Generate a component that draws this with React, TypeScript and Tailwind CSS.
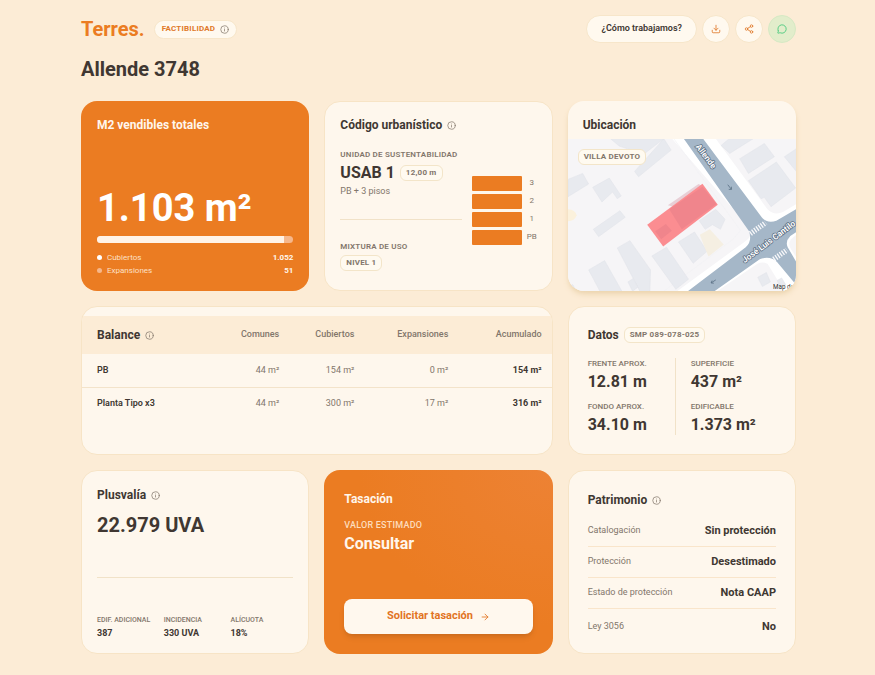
import React from 'react';
import { ArrowRight, Download, Info, MessageCircle, Share2 } from 'lucide-react';

const CARD = 'rounded-2xl border border-[#f7e4c6] bg-[#fef7ed]';

function InfoIcon() {
    return (
        <button type="button" aria-label="Más información" className="text-[#85796d]">
            <Info size={9} strokeWidth={2} />
        </button>
    );
}

function Title({ children, info }: { children: React.ReactNode; info?: boolean }) {
    return (
        <div className="flex items-center gap-[5px]">
            <h2 className="text-[12px] leading-4 font-bold">{children}</h2>
            {info && <InfoIcon />}
        </div>
    );
}

function Badge({ children }: { children: React.ReactNode }) {
    return (
        <span className="inline-flex h-4 items-center rounded-md border border-[#f3e5c9] bg-[#fffaf0] px-[5px] text-[8px] font-bold tracking-wide whitespace-nowrap text-[#82766b]">
            {children}
        </span>
    );
}

function Label({ children }: { children: React.ReactNode }) {
    return <div className="text-[8px] leading-3 font-semibold tracking-wide whitespace-nowrap text-[#82766b] uppercase">{children}</div>;
}

function Header() {
    return (
        <header>
            <div className="flex h-7 items-center justify-between">
                <div className="flex items-center gap-[9px]">
                    <a href="#" className="text-[20px] leading-7 font-bold text-[#eb7c22]">Terres.</a>
                    <span className="flex h-[19px] items-center gap-[5px] rounded-full border border-[#f7e6ca] bg-[#fff9ef] px-[7px] text-[8px] font-bold tracking-wide text-[#e07a2a]">
                        FACTIBILIDAD
                        <InfoIcon />
                    </span>
                </div>
                <div className="flex items-center gap-[5px]">
                    <button type="button" className="h-7 rounded-full border border-[#f7e6ca] bg-[#fff9ef] px-[14px] text-[9px] font-semibold">
                        ¿Cómo trabajamos?
                    </button>
                    <button type="button" aria-label="Descargar" className="flex size-7 items-center justify-center rounded-full border border-[#f7e6ca] bg-[#fff9ef] text-[#e07a2a]">
                        <Download size={10} />
                    </button>
                    <button type="button" aria-label="Compartir" className="flex size-7 items-center justify-center rounded-full border border-[#f7e6ca] bg-[#fff9ef] text-[#e07a2a]">
                        <Share2 size={10} />
                    </button>
                    <button type="button" aria-label="WhatsApp" className="flex size-7 items-center justify-center rounded-full border border-[#d6e9c4] bg-[#e2edcb] text-[#3fc878]">
                        <MessageCircle size={10} />
                    </button>
                </div>
            </div>
            <h1 className="mt-3 text-[20px] leading-7 font-bold">Allende 3748</h1>
        </header>
    );
}

function SellableCard() {
    return (
        <section className="flex flex-col rounded-2xl bg-[#eb7c22] px-4 pt-4 pb-[14px] text-[#fff6ec]">
            <Title>M2 vendibles totales</Title>
            <div className="mt-auto text-[38px] leading-[40px] font-bold text-white">1.103 m²</div>
            <div className="mt-2 flex h-[7px] overflow-hidden rounded-full bg-[#f6b78b]">
                <div className="w-[95.4%] bg-[#fff3e7]" />
            </div>
            <dl className="mt-2 text-[8px] leading-[13px]">
                <div className="flex items-center">
                    <span className="mr-[5px] size-[5px] rounded-full bg-white" />
                    <dt className="text-[#fde0c6]">Cubiertos</dt>
                    <dd className="ml-auto font-bold">1.052</dd>
                </div>
                <div className="flex items-center">
                    <span className="mr-[5px] size-[5px] rounded-full bg-[#f6b78b]" />
                    <dt className="text-[#fde0c6]">Expansiones</dt>
                    <dd className="ml-auto font-bold">51</dd>
                </div>
            </dl>
        </section>
    );
}

function CodeCard() {
    const floors = ['3', '2', '1', 'PB'];

    return (
        <section className={`${CARD} flex flex-col p-[15px]`}>
            <Title info>Código urbanístico</Title>
            <div className="flex flex-1 gap-[10px]">
                <div className="mt-4 flex flex-1 flex-col">
                    <Label>Unidad de sustentabilidad</Label>
                    <div className="mt-[2px] flex items-center gap-[5px]">
                        <span className="text-[16px] leading-5 font-bold whitespace-nowrap">USAB 1</span>
                        <Badge>12,00 m</Badge>
                    </div>
                    <div className="mt-[2px] text-[9px] leading-3 text-[#82766b]">PB + 3 pisos</div>
                    <hr className="mt-[22px] border-[#f1e2c8]" />
                    <div className="mt-[21px]">
                        <Label>Mixtura de uso</Label>
                    </div>
                    <div className="mt-[2px] flex">
                        <Badge>NIVEL 1</Badge>
                    </div>
                </div>
                <ul className="mt-[42px] space-y-[2px]">
                    {floors.map((floor) => (
                        <li key={floor} className="flex h-4 items-center gap-[5px]">
                            <span className="h-[15px] w-[50px] rounded-[1px] bg-[#eb7c22]" />
                            <span className="w-[10px] text-center text-[8px] text-[#82766b]">{floor}</span>
                        </li>
                    ))}
                </ul>
            </div>
        </section>
    );
}

function StreetMap() {
    return (
        <svg viewBox="22 130 686 458" preserveAspectRatio="xMidYMid slice" className="absolute inset-0 size-full" aria-hidden="true">
            <rect x="22" y="130" width="686" height="458" fill="#f6f5f7" />
            {/* pavements */}
            <path d="M335 130 L565 395 Q582 420 552 440 L350 588 L708 588 L708 130Z" fill="#fff" />
            <path d="M466 130 L620 340 Q640 362 668 350 L708 326 L708 130Z" fill="#f6f5f7" />
            <path d="M470 588 L590 506 Q606 498 622 506 L672 588Z" fill="#f6f5f7" />
            <path d="M708 418 L692 432 Q682 446 692 462 L708 486Z" fill="#f6f5f7" />
            <path d="M340 130 L540 405 L520 430 L310 588" fill="none" stroke="#f1f1f4" strokeWidth="2" />
            {/* roads */}
            <path d="M370 130 L428 130 L604 366 Q622 386 648 376 L708 341 L708 410 L690 422 Q674 438 682 456 L708 500 L708 570 L650 500 Q628 480 598 492 L462 588 L382 588 L556 456 Q576 438 566 408Z" fill="#a5b7c8" />
            {/* buildings */}
            <g fill="#e8eaef" stroke="#e0e3e9" strokeWidth="1.5">
                <path d="M22 252 L66 234 L84 266 L22 304Z" />
                <path d="M96 276 L146 248 L182 302 L170 310 L156 290 L124 320Z" />
                <path d="M98 402 L178 346 L194 366 L114 424Z" />
                <path d="M84 524 L132 496 L184 588 L118 588Z" />
                <path d="M170 458 L208 436 L270 524 L268 588 L238 588Z" />
                <path d="M274 482 L318 456 L384 552 L346 582Z" />
                <path d="M202 560 L218 550 L232 576 L216 588Z" />
                <path d="M22 576 L36 568 L48 588 L22 588Z" />
                <path d="M354 440 L402 410 L440 468 L398 504Z" />
                <path d="M416 376 L466 342 L494 372 L480 402 L456 388 L434 402Z" />
                <path d="M222 228 L310 130 L332 164 L234 244Z" />
                <path d="M150 130 L310 130 L250 176 L176 152Z" />
                <path d="M482 150 L506 130 L578 130 L508 174Z" />
                <path d="M538 190 L612 144 L642 184 L564 234Z" />
                <path d="M564 256 L648 200 L706 278 L632 334 L612 306 L602 310Z" />
                <path d="M672 184 L708 160 L708 228Z" />
                <path d="M592 546 L618 532 L630 560 L606 574Z" />
                <path d="M650 556 L664 548 L676 568 L662 578Z" />
            </g>
            <path d="M418 418 L448 402 L490 448 L444 484 L430 450Z" fill="#f5efe2" />
            <path d="M22 342 Q44 344 48 360 Q42 378 22 378Z" fill="#fbf1dc" />
            {/* lot */}
            <path d="M322 330 L414 266 L430 274 L346 336Z" fill="#e8cfd6" />
            <path d="M260 388 L426 265 L472 328 L308 454Z" fill="#fb8d91" />
            <path d="M326 342 L426 274 L468 326 L364 402Z" fill="#f0858c" />
            <path d="M284 408 L316 386 L334 406 L302 432Z" fill="#f0858c" />
            {/* crossings */}
            <path d="M570 415 L616 382" stroke="#f8f8fa" strokeWidth="16" strokeDasharray="4 4" />
            <path d="M640 492 L680 464" stroke="#f8f8fa" strokeWidth="16" strokeDasharray="4 4" />
            {/* one-way arrows */}
            <g fill="none" stroke="#5c7186" strokeWidth="2.5">
                <path d="M502 268 L513 282 M513 274 L513 282 L505 282" />
                <path d="M466 554 L452 563 M455 556 L452 563 L460 564" />
            </g>
            <g fill="#fff" stroke="#5f7286" strokeWidth="5" paintOrder="stroke" strokeLinejoin="round" fontSize="25" fontWeight="600" textAnchor="middle">
                <text transform="translate(430 188) rotate(53)">Allende</text>
                <text transform="translate(630 446) rotate(-37)">José Luis Cantilo</text>
            </g>
            <text x="638" y="582" fontSize="19" fill="#333">Map det</text>
        </svg>
    );
}

function LocationCard() {
    return (
        <section className="flex flex-col overflow-hidden rounded-2xl bg-[#fef7ed] shadow-md shadow-[#ecd5b0]">
            <div className="px-[15px] pt-4 pb-[6px]">
                <Title>Ubicación</Title>
            </div>
            <div className="relative flex-1">
                <StreetMap />
                <div className="absolute top-[10px] left-[10px] flex">
                    <Badge>VILLA DEVOTO</Badge>
                </div>
            </div>
        </section>
    );
}

function BalanceCard() {
    const rows = [
        { name: 'PB', values: ['44 m²', '154 m²', '0 m²'], total: '154 m²' },
        { name: 'Planta Tipo x3', values: ['44 m²', '300 m²', '17 m²'], total: '316 m²' },
    ];

    return (
        <section className={`${CARD} col-span-2 overflow-hidden pt-[9px]`}>
            <table className="w-full table-fixed text-right text-[9px]">
                <colgroup>
                    <col className="w-[25%]" />
                    <col className="w-[17%]" />
                    <col className="w-[16%]" />
                    <col className="w-[20%]" />
                    <col className="w-[22%]" />
                </colgroup>
                <thead>
                    <tr className="h-[38px] bg-[#fcecd6] text-[#82766b]">
                        <th className="pl-[15px] text-[#403732]">
                            <Title info>Balance</Title>
                        </th>
                        <th className="font-medium">Comunes</th>
                        <th className="font-medium">Cubiertos</th>
                        <th className="font-medium">Expansiones</th>
                        <th className="pr-[10px] font-medium">Acumulado</th>
                    </tr>
                </thead>
                <tbody>
                    {rows.map((row) => (
                        <tr key={row.name} className="h-[33px] border-b border-[#f3e3ca] last:border-0">
                            <th className="pl-[15px] text-left font-semibold">{row.name}</th>
                            {row.values.map((value, idx) => (
                                <td key={idx} className="text-[#82766b]">{value}</td>
                            ))}
                            <td className="pr-[10px] font-bold">{row.total}</td>
                        </tr>
                    ))}
                </tbody>
            </table>
        </section>
    );
}

function DataItem({ label, value }: { label: string; value: string }) {
    return (
        <div>
            <div className="text-[8px] leading-3 font-medium text-[#82766b]">{label}</div>
            <div className="mt-[2px] text-[16px] leading-5 font-bold">{value}</div>
        </div>
    );
}

function DataCard() {
    return (
        <section className={`${CARD} px-[19px] pt-5`}>
            <div className="flex items-center gap-[5px]">
                <Title>Datos</Title>
                <Badge>SMP 089-078-025</Badge>
            </div>
            <div className="mt-[15px] grid grid-cols-[88px_1fr]">
                <div className="space-y-[9px] border-r border-[#f1e2c8]">
                    <DataItem label="FRENTE APROX." value="12.81 m" />
                    <DataItem label="FONDO APROX." value="34.10 m" />
                </div>
                <div className="space-y-[9px] pl-[15px]">
                    <DataItem label="SUPERFICIE" value="437 m²" />
                    <DataItem label="EDIFICABLE" value="1.373 m²" />
                </div>
            </div>
        </section>
    );
}

function GainCard() {
    const items = [
        { label: 'EDIF. ADICIONAL', value: '387' },
        { label: 'INCIDENCIA', value: '330 UVA' },
        { label: 'ALÍCUOTA', value: '18%' },
    ];

    return (
        <section className={`${CARD} flex flex-col px-[15px] pt-4 pb-[14px]`}>
            <Title info>Plusvalía</Title>
            <div className="mt-2 text-[20px] leading-7 font-bold">22.979 UVA</div>
            <hr className="my-auto border-[#f1e2c8]" />
            <dl className="grid grid-cols-3 gap-1">
                {items.map((item) => (
                    <div key={item.label}>
                        <dt className="text-[7px] leading-[11px] font-medium whitespace-nowrap text-[#82766b]">{item.label}</dt>
                        <dd className="mt-px text-[9px] leading-3 font-bold">{item.value}</dd>
                    </div>
                ))}
            </dl>
        </section>
    );
}

function AppraisalCard() {
    return (
        <section className="flex flex-col rounded-2xl bg-[#eb7c22] bg-radial-[at_100%_0%] from-[#ed8234] to-[#eb7c22] to-60% px-5 pt-[21px] pb-5 text-[#fff6ec]">
            <Title>Tasación</Title>
            <div className="mt-3 text-[9px] leading-3 font-medium tracking-wide text-[#fddcbd]">VALOR ESTIMADO</div>
            <div className="mt-[3px] text-[16px] leading-5 font-bold">Consultar</div>
            <button type="button" className="mt-auto flex h-[35px] items-center justify-center gap-[7px] rounded-lg bg-[#fff8ee] text-[11px] font-bold text-[#e2741f] shadow-md">
                Solicitar tasación
                <ArrowRight size={10} />
            </button>
        </section>
    );
}

function HeritageCard() {
    const rows = [
        { label: 'Catalogación', value: 'Sin protección' },
        { label: 'Protección', value: 'Desestimado' },
        { label: 'Estado de protección', value: 'Nota CAAP' },
        { label: 'Ley 3056', value: 'No' },
    ];

    return (
        <section className={`${CARD} px-[19px] pt-[21px]`}>
            <Title info>Patrimonio</Title>
            <dl className="mt-2">
                {rows.map((row) => (
                    <div key={row.label} className="flex h-[31px] items-center justify-between border-b border-[#f9e5cb] last:h-9 last:border-0">
                        <dt className="text-[9px] text-[#82766b]">{row.label}</dt>
                        <dd className="text-[11px] font-bold">{row.value}</dd>
                    </div>
                ))}
            </dl>
        </section>
    );
}

export default function App() {
    return (
        <main className="min-h-screen bg-[#fcecd6] pt-[15px] pr-[79px] pb-5 pl-[81px] font-['Roboto',sans-serif] text-[#403732]">
            <Header />
            <div className="mt-[18px] grid grid-cols-3 grid-rows-[minmax(190px,auto)_minmax(149px,auto)_minmax(184px,auto)] gap-x-[15px] gap-y-[15px]">
                <SellableCard />
                <CodeCard />
                <LocationCard />
                <BalanceCard />
                <DataCard />
                <GainCard />
                <AppraisalCard />
                <HeritageCard />
            </div>
        </main>
    );
}
